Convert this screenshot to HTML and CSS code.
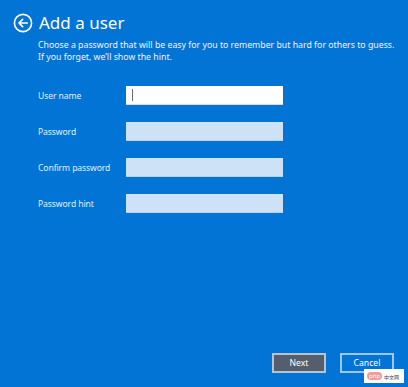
FILE: index.html
```html
<!DOCTYPE html>
<html lang="en">
<head>
<meta charset="utf-8">
<link rel="stylesheet" href="styles.css">
</head>
<body>
<div class="page">
  <header class="head">
    <svg class="back" width="20" height="20" viewBox="0 0 20 20">
      <circle cx="10" cy="10" r="8.6" fill="none" stroke="#fff" stroke-width="1.6"/>
      <path d="M14.2 10H6.2M9.6 6.4L6 10l3.6 3.6" fill="none" stroke="#fff" stroke-width="1.7" stroke-linecap="round" stroke-linejoin="round"/>
    </svg>
    <h1 class="title">Add a user</h1>
  </header>
  <p class="desc">Choose a password that will be easy for you to remember but hard for others to guess.<br>If you forget, we’ll show the hint.</p>
  <div class="form">
    <label class="label">User name</label>
    <div class="field field-active"><span class="caret"></span></div>
    <label class="label">Password</label>
    <div class="field"></div>
    <label class="label">Confirm password</label>
    <div class="field"></div>
    <label class="label">Password hint</label>
    <div class="field"></div>
  </div>
  <div class="actions">
    <button class="btn btn-primary">Next</button>
    <button class="btn btn-secondary">Cancel</button>
  </div>
</div>
<div class="watermark"><span class="wm-pill">php</span><span class="wm-text">中文网</span></div>
</body>
</html>
```
FILE: styles.css
```css
html, body {
  margin: 0;
  padding: 0;
  height: 100%;
}
body {
  background: #0274d6;
  color: #fff;
  font-family: "Noto Sans", "Open Sans", "Noto Sans CJK SC", sans-serif;
  overflow: hidden;
  position: relative;
}
.page {
  height: 100%;
  box-sizing: border-box;
  padding: 13px 14px 14px 13px;
  display: flex;
  flex-direction: column;
}
.head {
  display: flex;
  align-items: center;
  gap: 6px;
}
.back {
  display: block;
  flex: none;
}
.title {
  margin: 0;
  font-size: 17px;
  font-weight: 400;
  line-height: 20px;
}
.desc {
  margin: 6px 0 0 25px;
  font-size: 8.75px;
  letter-spacing: 0;
  line-height: 12px;
  white-space: nowrap;
  color: #eef4fb;
}
.form {
  margin: 23px 0 0 25px;
  display: grid;
  grid-template-columns: 88px 157px;
  grid-auto-rows: 19px;
  row-gap: 17px;
  align-items: center;
}
.label {
  font-size: 8.6px;
  letter-spacing: -0.1px;
  color: #e4eefa;
  line-height: 12px;
}
.field {
  height: 19px;
  box-sizing: border-box;
  background: #cde2f6;
  border-bottom: 1px solid #b6d2ef;
  position: relative;
}
.field-active {
  background: #fff;
  border-bottom: 1px solid #d6dbe2;
}
.caret {
  position: absolute;
  left: 6px;
  top: 3px;
  width: 1px;
  height: 12px;
  background: #6b6b6b;
}
.actions {
  margin-top: auto;
  display: flex;
  justify-content: flex-end;
  gap: 14px;
}
.btn {
  width: 54px;
  height: 20px;
  box-sizing: border-box;
  font-family: inherit;
  font-size: 8.6px;
  color: #fff;
  padding: 0;
  border: 2px solid;
}
.btn-primary {
  background: #555e6c;
  border-color: #b8c3d2;
}
.btn-secondary {
  background: #0274d6;
  border-color: #9fc6ef;
}
.watermark {
  position: absolute;
  right: 4px;
  bottom: 4px;
  width: 37px;
  height: 14px;
  background: #fff;
  display: flex;
  align-items: center;
  gap: 2px;
  padding-left: 3px;
}
.wm-pill {
  background: #f39a9a;
  color: #fff;
  font-size: 6px;
  line-height: 8px;
  border-radius: 4px;
  padding: 0 2px;
}
.wm-text {
  color: #444;
  font-size: 5px;
  font-family: "Noto Sans CJK SC", sans-serif;
}
```
